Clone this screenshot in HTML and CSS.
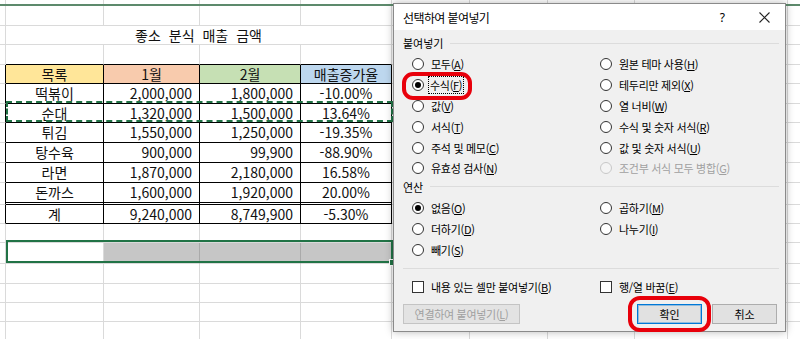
FILE: index.html
```html
<!DOCTYPE html>
<html lang="ko">
<head>
    <meta charset="UTF-8">
    <title>선택하여 붙여넣기</title>
    <link rel="stylesheet" href="styles.css">
</head>
<body>

<div id="page">
    <div class="sheet">
        <div class="row r-top"><div class="c stub"></div><div class="c"></div><div class="c"></div><div class="c"></div><div class="c"></div><div class="rest"></div></div>
        <div class="row h20"><div class="c stub"></div><div class="c"></div><div class="c"></div><div class="c"></div><div class="c"></div><div class="rest"></div></div>
        <div class="row h19"><div class="c stub"></div><div class="c title">좋소 분식 매출 금액</div><div class="rest"></div></div>
        <div class="row h20 edge"><div class="c stub"></div><div class="c"></div><div class="c"></div><div class="c"></div><div class="c"></div><div class="rest"></div></div>

        <div class="row h19 data">
            <div class="c stub"></div>
            <div class="c mid yellow">목록</div>
            <div class="c mid peach">1월</div>
            <div class="c mid green">2월</div>
            <div class="c mid blue">매출증가율</div>
            <div class="rest"></div>
        </div>
        <div class="row h20 data">
            <div class="c stub"></div><div class="c mid">떡볶이</div><div class="c num">2,000,000</div><div class="c num">1,800,000</div><div class="c mid">-10.00%</div><div class="rest"></div>
        </div>
        <div class="row h19 data">
            <div class="c stub"></div><div class="c mid">순대</div><div class="c num">1,320,000</div><div class="c num">1,500,000</div><div class="c mid">13.64%</div><div class="rest"></div>
        </div>
        <div class="row h20 data">
            <div class="c stub"></div><div class="c mid">튀김</div><div class="c num">1,550,000</div><div class="c num">1,250,000</div><div class="c mid">-19.35%</div><div class="rest"></div>
        </div>
        <div class="row h20 data">
            <div class="c stub"></div><div class="c mid">탕수육</div><div class="c num">900,000</div><div class="c num">99,900</div><div class="c mid">-88.90%</div><div class="rest"></div>
        </div>
        <div class="row h20 data">
            <div class="c stub"></div><div class="c mid">라면</div><div class="c num">1,870,000</div><div class="c num">2,180,000</div><div class="c mid">16.58%</div><div class="rest"></div>
        </div>
        <div class="row h22 data before-total">
            <div class="c stub"></div><div class="c mid">돈까스</div><div class="c num">1,600,000</div><div class="c num">1,920,000</div><div class="c mid">20.00%</div><div class="rest"></div>
        </div>
        <div class="row h19 data">
            <div class="c stub"></div><div class="c mid">계</div><div class="c num">9,240,000</div><div class="c num">8,749,900</div><div class="c mid">-5.30%</div><div class="rest"></div>
        </div>

        <div class="row h19"><div class="c stub"></div><div class="c"></div><div class="c"></div><div class="c"></div><div class="c"></div><div class="rest"></div></div>
        <div class="row h21"><div class="c stub"></div><div class="c"></div><div class="c sel"></div><div class="c sel"></div><div class="c sel"></div><div class="rest"></div></div>
        <div class="row h20"><div class="c stub"></div><div class="c"></div><div class="c"></div><div class="c"></div><div class="c"></div><div class="rest"></div></div>
        <div class="row h19"><div class="c stub"></div><div class="c"></div><div class="c"></div><div class="c"></div><div class="c"></div><div class="rest"></div></div>
        <div class="row h19"><div class="c stub"></div><div class="c"></div><div class="c"></div><div class="c"></div><div class="c"></div><div class="rest"></div></div>
        <div class="row h19"><div class="c stub"></div><div class="c"></div><div class="c"></div><div class="c"></div><div class="c"></div><div class="rest"></div></div>

        <!-- copy marquee + current selection -->
        <div class="marquee"></div>
        <div class="selection"><span class="handle"></span></div>
    </div>

    <div class="dialog">
        <div class="titlebar">
            <span class="dlg-title">선택하여 붙여넣기</span>
            <span class="help">?</span>
            <svg class="close" width="11" height="11" viewBox="0 0 11 11">
                <path d="M0.5 0.5 L10.5 10.5 M10.5 0.5 L0.5 10.5" stroke="#222" stroke-width="1.1" fill="none"/>
            </svg>
        </div>

        <div class="dlg-body">
            <div class="group-label">붙여넣기</div>
            <div class="opts">
                <div class="opt"><span class="radio"></span>모두(<u>A</u>)</div>
                <div class="opt"><span class="radio"></span>원본 테마 사용(<u>H</u>)</div>
                <div class="opt"><span class="radio on"></span><span class="focus">수식(<u>F</u>)</span></div>
                <div class="opt"><span class="radio"></span>테두리만 제외(<u>X</u>)</div>
                <div class="opt"><span class="radio"></span>값(<u>V</u>)</div>
                <div class="opt"><span class="radio"></span>열 너비(<u>W</u>)</div>
                <div class="opt"><span class="radio"></span>서식(<u>T</u>)</div>
                <div class="opt"><span class="radio"></span>수식 및 숫자 서식(<u>R</u>)</div>
                <div class="opt"><span class="radio"></span>주석 및 메모(<u>C</u>)</div>
                <div class="opt"><span class="radio"></span>값 및 숫자 서식(<u>U</u>)</div>
                <div class="opt"><span class="radio"></span>유효성 검사(<u>N</u>)</div>
                <div class="opt disabled"><span class="radio"></span>조건부 서식 모두 병합(<u>G</u>)</div>
            </div>

            <div class="group-label">연산</div>
            <div class="opts">
                <div class="opt"><span class="radio on"></span>없음(<u>O</u>)</div>
                <div class="opt"><span class="radio"></span>곱하기(<u>M</u>)</div>
                <div class="opt"><span class="radio"></span>더하기(<u>D</u>)</div>
                <div class="opt"><span class="radio"></span>나누기(<u>I</u>)</div>
                <div class="opt"><span class="radio"></span>빼기(<u>S</u>)</div>
            </div>

            <div class="separator"></div>

            <div class="opts checks">
                <div class="opt"><span class="check"></span>내용 있는 셀만 붙여넣기(<u>B</u>)</div>
                <div class="opt"><span class="check"></span>행/열 바꿈(<u>E</u>)</div>
            </div>

            <div class="buttons">
                <button class="btn link" disabled>연결하여 붙여넣기(<u>L</u>)</button>
                <button class="btn ok">확인</button>
                <button class="btn">취소</button>
            </div>
        </div>
    </div>

    <!-- red highlight marks -->
    <div class="mark mark-formula"></div>
    <div class="mark mark-ok"></div>
</div>

</body>
</html>
```

FILE: styles.css
```css
body {
    margin: 0;
    background: #fff;
    font-family: "Noto Sans CJK KR", "Noto Sans", sans-serif;
}

#page {
    position: relative;
    width: 800px;
    height: 339px;
    overflow: hidden;
}

/* ---------- spreadsheet ---------- */

.sheet {
    position: relative;
    width: 800px;
    height: 339px;
    font-size: 14px;
    color: #111;
}

.row {
    display: grid;
    grid-template-columns: 6px 98px 96px 101px 91px 1fr;
    height: 20px;
}

.h19 { height: 19px; }
.h20 { height: 20px; }
.h21 { height: 21px; }
.h22 { height: 22px; }

.r-top {
    height: 4px;
    border-bottom: 2px solid #5d8a6c;
}
.r-top .c, .r-top .rest { border-bottom: none; }

.c {
    box-sizing: border-box;
    border-right: 1px solid #dadada;
    border-bottom: 1px solid #dadada;
    line-height: 18px;
    white-space: nowrap;
    overflow: hidden;
}

.rest {
    box-sizing: border-box;
    border-bottom: 1px solid #dadada;
    background:
        linear-gradient(#dadada, #dadada) 77px 0 / 1px 100% no-repeat,
        linear-gradient(#dadada, #dadada) 155px 0 / 1px 100% no-repeat,
        linear-gradient(#dadada, #dadada) 242px 0 / 1px 100% no-repeat,
        linear-gradient(#dadada, #dadada) 395px 0 / 1px 100% no-repeat;
}

.title {
    grid-column: 2 / 6;
    text-align: center;
    word-spacing: 4px;
}

.edge .c:not(.stub) { border-bottom-color: #000; }

.data .c { border-right-color: #000; border-bottom-color: #000; }

.before-total .c:not(.stub) {
    border-bottom: 3px double #000;
}
.data .stub { border-bottom-color: #dadada; }

.mid { text-align: center; }
.num { text-align: right; padding-right: 7px; }

.yellow { background: #ffe699; }
.peach  { background: #f8cbad; }
.green  { background: #c6e0b4; }
.blue   { background: #bdd7ee; }

.sel {
    background: #c6c6c6;
    border-right-color: #aaa;
}

.marquee {
    position: absolute;
    left: 6px;
    top: 101px;
    width: 387px;
    height: 21px;
    box-sizing: border-box;
    border: 2px dashed #217346;
}

.selection {
    position: absolute;
    left: 6px;
    top: 240px;
    width: 387px;
    height: 23px;
    box-sizing: border-box;
    border: 2px solid #217346;
}

.handle {
    position: absolute;
    right: -5px;
    bottom: -5px;
    width: 5px;
    height: 5px;
    background: #217346;
    border: 1px solid #fff;
}

/* ---------- paste special dialog ---------- */

.dialog {
    position: absolute;
    left: 393px;
    top: 3px;
    width: 393px;
    height: 329px;
    box-sizing: border-box;
    border: 1px solid #8a8a8a;
    background: #f0f0f0;
    box-shadow: 0 0 8px rgba(0, 0, 0, 0.28);
    font-size: 11px;
    color: #000;
    display: flex;
    flex-direction: column;
}

.titlebar {
    height: 26px;
    background: #fff;
    display: flex;
    align-items: center;
    padding-left: 9px;
    font-size: 12px;
}

.dlg-title { letter-spacing: -0.6px; }

.help {
    margin-left: auto;
    margin-right: 34px;
    font-family: "Noto Sans", sans-serif;
    font-size: 12px;
}

.close { margin-right: 15px; }

.dlg-body {
    padding: 5px 6px 0 9px;
    display: flex;
    flex-direction: column;
}

.group-label {
    height: 16px;
    line-height: 16px;
    display: flex;
    align-items: center;
}

.group-label::after {
    content: "";
    flex: 1;
    margin-left: 7px;
    border-top: 1px solid #dcdcdc;
}

.opts {
    display: grid;
    grid-template-columns: 188px 1fr;
    grid-auto-rows: 20.8px;
    padding-left: 9px;
    margin-top: 3px;
}

.opt {
    display: flex;
    align-items: center;
    white-space: nowrap;
    letter-spacing: -0.3px;
}

.opt u { text-decoration-thickness: 1px; text-underline-offset: 1px; }

.radio {
    width: 12px;
    height: 12px;
    box-sizing: border-box;
    border: 1px solid #333;
    border-radius: 50%;
    background: #fff;
    margin-right: 7px;
    position: relative;
    flex-shrink: 0;
}

.radio.on::after {
    content: "";
    position: absolute;
    left: 2px;
    top: 2px;
    width: 6px;
    height: 6px;
    border-radius: 50%;
    background: #000;
}

.focus {
    outline: 1px dotted #000;
    outline-offset: 0;
    padding: 0 1px;
    margin-left: -2px;
}

.disabled { color: #a0a0a0; }
.disabled .radio { border-color: #c8c8c8; background: #f4f4f4; }

.separator {
    margin-top: 8px;
    border-top: 1px solid #dcdcdc;
}

.checks {
    margin-top: 8px;
    grid-auto-rows: 20px;
}

.check {
    width: 12px;
    height: 12px;
    box-sizing: border-box;
    border: 1px solid #333;
    background: #fff;
    margin-right: 7px;
    flex-shrink: 0;
}

.buttons {
    display: flex;
    margin-top: 7px;
    padding-right: 2px;
}

.btn {
    height: 20px;
    width: 65px;
    padding: 0;
    margin-left: 10px;
    box-sizing: border-box;
    border: 1px solid #adadad;
    background: #e1e1e1;
    font-family: inherit;
    font-size: 11px;
    color: #000;
}

.btn.link {
    width: 117px;
    margin-left: 0;
    margin-right: auto;
    color: #a0a0a0;
    border-color: #c4c4c4;
    background: #e3e3e3;
    letter-spacing: -0.3px;
}

.btn.ok {
    border-color: #0078d7;
    box-shadow: inset 0 0 0 1px rgba(0, 120, 215, 0.35);
}

/* ---------- red highlight marks ---------- */

.mark {
    position: absolute;
    box-sizing: border-box;
    border: 4px solid #e8000b;
    border-radius: 11px;
}

.mark-formula {
    left: 402px;
    top: 72px;
    width: 70px;
    height: 28px;
}

.mark-ok {
    left: 628px;
    top: 296px;
    width: 83px;
    height: 36px;
    border-radius: 12px;
}
```
